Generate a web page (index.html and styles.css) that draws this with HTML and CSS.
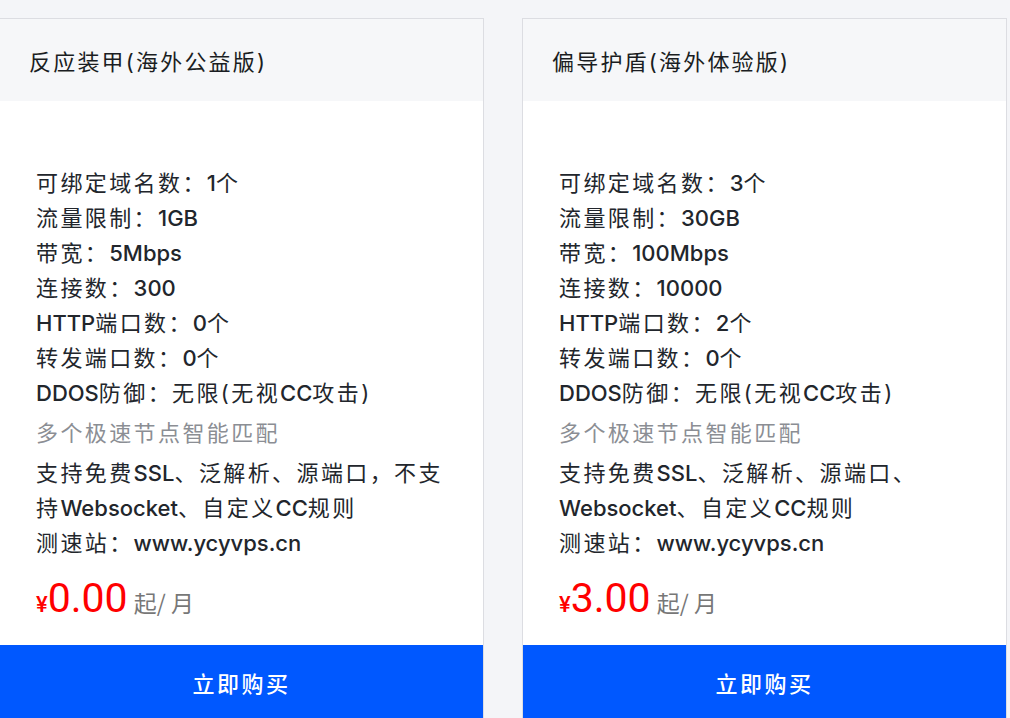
FILE: index.html
```html
<!DOCTYPE html>
<html lang="zh-CN">
<head>
<meta charset="utf-8">
<title>套餐</title>
<link rel="stylesheet" href="styles.css">
</head>
<body>
<div class="cards">
  <div class="card">
    <div class="card-head">反应装甲(海外公益版)</div>
    <div class="card-body">
      <ul class="specs">
        <li>可绑定域名数：<span class="en">1</span>个</li>
        <li>流量限制：<span class="en">1GB</span></li>
        <li>带宽：<span class="en">5Mbps</span></li>
        <li>连接数：<span class="en">300</span></li>
        <li><span class="en">HTTP</span>端口数：<span class="en">0</span>个</li>
        <li>转发端口数：<span class="en">0</span>个</li>
        <li><span class="en">DDOS</span>防御：无限(无视<span class="en">CC</span>攻击)</li>
      </ul>
      <p class="note">多个极速节点智能匹配</p>
      <p class="feature">支持免费<span class="en">SSL</span>、泛解析、源端口，不支持<span class="en">Websocket</span>、自定义<span class="en">CC</span>规则</p>
      <p class="site">测速站：<span class="en">www.ycyvps.cn</span></p>
      <div class="price"><span class="cur">¥</span><span class="num">0.00</span> <span class="unit">起/ 月</span></div>
    </div>
    <button class="buy">立即购买</button>
  </div>
  <div class="card">
    <div class="card-head">偏导护盾(海外体验版)</div>
    <div class="card-body">
      <ul class="specs">
        <li>可绑定域名数：<span class="en">3</span>个</li>
        <li>流量限制：<span class="en">30GB</span></li>
        <li>带宽：<span class="en">100Mbps</span></li>
        <li>连接数：<span class="en">10000</span></li>
        <li><span class="en">HTTP</span>端口数：<span class="en">2</span>个</li>
        <li>转发端口数：<span class="en">0</span>个</li>
        <li><span class="en">DDOS</span>防御：无限(无视<span class="en">CC</span>攻击)</li>
      </ul>
      <p class="note">多个极速节点智能匹配</p>
      <p class="feature">支持免费<span class="en">SSL</span>、泛解析、源端口、<span class="en">Websocket</span>、自定义<span class="en">CC</span>规则</p>
      <p class="site">测速站：<span class="en">www.ycyvps.cn</span></p>
      <div class="price"><span class="cur">¥</span><span class="num">3.00</span> <span class="unit">起/ 月</span></div>
    </div>
    <button class="buy">立即购买</button>
  </div>
</div>
</body>
</html>
```

FILE: styles.css
```css
html, body {
  margin: 0;
  padding: 0;
}
body {
  background: #f4f5f8;
  font-family: "Inter", "Noto Sans CJK SC", sans-serif;
  color: #22262c;
  overflow: hidden;
}
.cards {
  display: flex;
  gap: 38px;
  padding-top: 18px;
  margin-left: -1px;
}
.card {
  box-sizing: border-box;
  width: 485px;
  flex: none;
  background: #fff;
  border: 1px solid #dcdde2;
  border-bottom: none;
  display: flex;
  flex-direction: column;
}
.card-head {
  height: 82px;
  background: #f6f7f9;
  padding-left: 29px;
  display: flex;
  align-items: center;
  font-size: 22px;
  letter-spacing: 2.2px;
  color: #1a1d22;
}
.card-body {
  padding: 65px 36px 22px 36px;
  font-size: 22px;
  letter-spacing: 2.4px;
  font-weight: 400;
}
.en {
  letter-spacing: 0;
  font-weight: 500;
}
.specs {
  list-style: none;
  margin: 0;
  padding: 0;
}
.specs li, .note, .feature, .site {
  line-height: 35px;
}
.note {
  margin: 5px 0 0;
  color: #8b8e94;
}
.feature {
  margin: 5px 0 0;
}
.site {
  margin: 0;
}
.price {
  margin-top: 12px;
  height: 50px;
  line-height: 50px;
  letter-spacing: 0;
  font-weight: 400;
}
.cur {
  color: #ff0000;
  font-family: "Roboto", "Noto Sans CJK SC", sans-serif;
  font-size: 22px;
  font-weight: 500;
}
.num {
  color: #ff0000;
  font-family: "Roboto", sans-serif;
  font-size: 41px;
}
.unit {
  color: #777;
  font-family: "Noto Sans CJK SC", sans-serif;
  font-size: 23px;
}
.buy {
  height: 74px;
  border: none;
  background: #0058ff;
  color: #fff;
  font-family: "Noto Sans CJK SC", sans-serif;
  font-size: 22px;
  font-weight: 500;
  letter-spacing: 2.5px;
  cursor: pointer;
}
```
